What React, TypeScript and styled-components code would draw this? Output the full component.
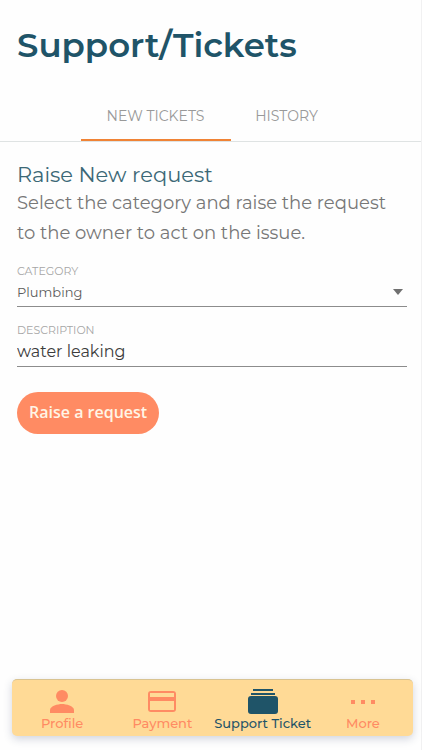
import { useState } from "react";
import styled, { createGlobalStyle } from "styled-components";

const teal = "#1f5468";
const coral = "#ff8b63";

const GlobalStyle = createGlobalStyle`
  *, *::before, *::after { box-sizing: border-box; }
  body {
    margin: 0;
    background: #fefefe;
    font-family: Montserrat, Inter, "Liberation Sans", sans-serif;
  }
  button, input, select { font-family: inherit; }
`;

const Page = styled.div`
  min-height: 100vh;
  display: flex;
  flex-direction: column;
  border-right: 1px solid #f1f1f2;
`;

const Title = styled.h1`
  margin: 0;
  padding: 21px 17px 0;
  font-size: 34px;
  line-height: 48px;
  font-weight: 600;
  color: ${teal};
`;

const Tabs = styled.div`
  display: flex;
  justify-content: center;
  margin-top: 23px;
  padding-left: 2px;
  border-bottom: 1px solid #dfe3e3;
`;

const Tab = styled.button<{ $active: boolean }>`
  height: 49px;
  width: ${(p) => (p.$active ? "150px" : "112px")};
  padding: 0;
  border: 0;
  border-bottom: 2px solid ${(p) => (p.$active ? "#f08335" : "transparent")};
  background: none;
  color: #999;
  font-size: 14px;
  white-space: nowrap;
`;

const Form = styled.form`
  display: flex;
  flex-direction: column;
  align-items: flex-start;
  padding: 20px 14px 24px 17px;
`;

const Heading = styled.h2`
  margin: 0;
  font-size: 21px;
  line-height: 26px;
  font-weight: 400;
  color: #3b6876;
`;

const Intro = styled.p`
  margin: 0;
  font-size: 18px;
  line-height: 30px;
  color: #777;
`;

const Field = styled.label`
  display: flex;
  flex-direction: column;
  width: 100%;
  margin-top: 16px;
  border-bottom: 1px solid #8c8c8c;
`;

const FieldLabel = styled.span`
  font-size: 11px;
  line-height: 14px;
  color: #a6a6a6;
`;

const SelectRow = styled.span`
  display: grid;
  align-items: center;
  grid-template-columns: 1fr 18px;
`;

const Select = styled.select`
  grid-area: 1 / 1 / 2 / 3;
  appearance: none;
  width: 100%;
  height: 28px;
  padding: 0;
  border: 0;
  outline: 0;
  background: transparent;
  font-size: 13px;
  color: #5c5c5c;
`;

const Arrow = styled.svg`
  grid-area: 1 / 2;
  width: 18px;
  height: 6px;
  pointer-events: none;
`;

const TextInput = styled.input`
  width: 100%;
  height: 29px;
  padding: 0;
  border: 0;
  outline: 0;
  background: transparent;
  font-size: 16px;
  color: #3c3c3c;
`;

const SubmitButton = styled.button`
  height: 42px;
  margin-top: 25px;
  padding: 0 12px 2px;
  border: 0;
  border-radius: 21px;
  background: ${coral};
  color: #fff5e6;
  && { font-family: "Open Sans", sans-serif; }
  font-size: 16px;
  font-weight: 600;
`;

const BottomNav = styled.nav`
  display: grid;
  grid-template-columns: repeat(4, 1fr);
  margin: auto 8px 14px 12px;
  height: 57px;
  padding-top: 7px;
  border-top: 1px solid #d9c391;
  border-radius: 5px;
  background: #ffda96;
  box-shadow: 0 3px 8px rgba(50, 65, 105, 0.22);
`;

const NavItem = styled.a<{ $active?: boolean }>`
  display: flex;
  flex-direction: column;
  align-items: center;
  color: ${(p) => (p.$active ? teal : coral)};
  font-size: 13px;
  line-height: 16px;
  font-weight: 500;
  text-decoration: none;
  white-space: nowrap;

  svg {
    width: 32px;
    height: 28px;
    fill: currentColor;
  }
`;

const navItems = [
  {
    label: "Profile",
    icon: (
      <>
        <circle cx="16" cy="9" r="6" />
        <path d="M4 26v-3c0-4 8-6 12-6s12 2 12 6v3z" />
      </>
    ),
  },
  {
    label: "Payment",
    icon: (
      <path
        fillRule="evenodd"
        d="M5 4h22a3 3 0 0 1 3 3v15a3 3 0 0 1-3 3H5a3 3 0 0 1-3-3V7a3 3 0 0 1 3-3zM4 6v4h24V6zM4 14v9h24v-9z"
      />
    ),
  },
  {
    label: "Support Ticket",
    icon: (
      <>
        <path d="M6 2h20v2H6zM4 6h24v2H4z" />
        <rect x="1" y="9" width="30" height="18" rx="3" />
      </>
    ),
  },
  {
    label: "More",
    icon: <path d="M4 13h4v4H4zM14 13h4v4h-4zM24 13h4v4h-4z" />,
  },
];

export default function App() {
  const [tab, setTab] = useState("NEW TICKETS");
  const [description, setDescription] = useState("water leaking");

  return (
    <>
      <GlobalStyle />
      <Page>
        <Title>Support/Tickets</Title>
        <Tabs role="tablist">
          {["NEW TICKETS", "HISTORY"].map((name) => (
            <Tab
              key={name}
              type="button"
              role="tab"
              aria-selected={tab === name}
              $active={tab === name}
              onClick={() => setTab(name)}
            >
              {name}
            </Tab>
          ))}
        </Tabs>
        <Form onSubmit={(e) => e.preventDefault()}>
          <Heading>Raise New request</Heading>
          <Intro>
            Select the category and raise the request to the owner to act on the issue.
          </Intro>
          <Field>
            <FieldLabel>CATEGORY</FieldLabel>
            <SelectRow>
              <Select defaultValue="Plumbing">
                <option>Plumbing</option>
              </Select>
              <Arrow viewBox="0 0 18 6" aria-hidden="true">
                <path d="M4 0h10L9 6z" fill="#707070" />
              </Arrow>
            </SelectRow>
          </Field>
          <Field>
            <FieldLabel>DESCRIPTION</FieldLabel>
            <TextInput value={description} onChange={(e) => setDescription(e.target.value)} />
          </Field>
          <SubmitButton type="submit">Raise a request</SubmitButton>
        </Form>
        <BottomNav>
          {navItems.map(({ label, icon }) => (
            <NavItem key={label} href="#" $active={label === "Support Ticket"}>
              <svg viewBox="0 0 32 28" aria-hidden="true">
                {icon}
              </svg>
              {label}
            </NavItem>
          ))}
        </BottomNav>
      </Page>
    </>
  );
}
